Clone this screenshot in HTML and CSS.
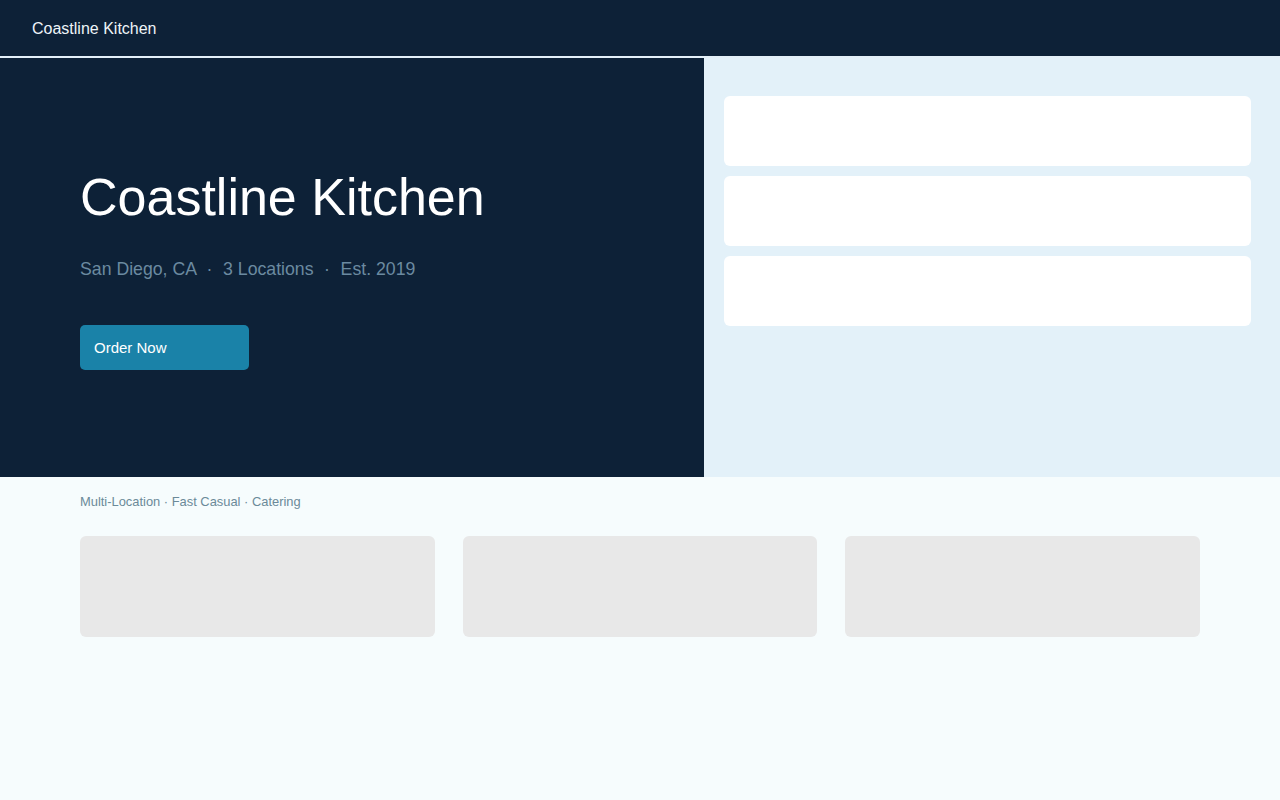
FILE: index.html
```html
<!DOCTYPE html>
<html lang="en">
<head>
<meta charset="utf-8">
<title>Coastline Kitchen</title>
<link rel="stylesheet" href="styles.css">
</head>
<body>
<header class="topbar">
  <span class="brand">Coastline Kitchen</span>
</header>
<section class="hero">
  <div class="hero-main">
    <h1 class="hero-title">Coastline Kitchen</h1>
    <p class="hero-meta">San Diego, CA <span class="sep">&nbsp;·&nbsp;</span> 3 Locations <span class="sep">&nbsp;·&nbsp;</span> Est. 2019</p>
    <a class="btn-order" href="#">Order Now</a>
  </div>
  <aside class="hero-side">
    <div class="side-card"></div>
    <div class="side-card"></div>
    <div class="side-card"></div>
  </aside>
</section>
<main class="content">
  <p class="tags">Multi-Location · Fast Casual · Catering</p>
  <div class="card-grid">
    <div class="tile"></div>
    <div class="tile"></div>
    <div class="tile"></div>
  </div>
</main>
</body>
</html>
```
FILE: styles.css
```css
* { box-sizing: border-box; }
html, body { margin: 0; padding: 0; }
body {
  font-family: "Liberation Sans", Arial, sans-serif;
  background: #f6fcfd;
  width: 1280px;
  min-height: 800px;
}
.topbar {
  height: 58px;
  background: #0d2137;
  border-bottom: 2px solid #e3f0f8;
  display: flex;
  align-items: center;
  padding: 2px 32px 0;
}
.brand {
  color: #eef4f8;
  font-size: 16px;
  line-height: 20px;
}
.hero {
  display: flex;
  height: 419px;
}
.hero-main {
  width: 704px;
  background: #0d2137;
  display: flex;
  flex-direction: column;
  justify-content: center;
  align-items: flex-start;
  padding: 0 80px;
}
.hero-title {
  margin: 0;
  color: #ffffff;
  font-size: 52px;
  font-weight: 400;
  line-height: 62px;
}
.hero-meta {
  margin: 29px 0 0;
  color: #6b8aa0;
  font-size: 17.7px;
  line-height: 24px;
}
.sep {
  margin: 0 0.75px;
}
.btn-order {
  margin-top: 44px;
  display: flex;
  align-items: center;
  width: 169px;
  height: 45px;
  padding: 0 14px;
  background: #1a82a8;
  border-radius: 5px;
  color: #ffffff;
  font-size: 15px;
  text-decoration: none;
}
.hero-side {
  flex: 1;
  background: #e3f1f9;
  padding: 38px 29px 0 20px;
  display: flex;
  flex-direction: column;
  gap: 10px;
}
.side-card {
  height: 70px;
  background: #ffffff;
  border-radius: 6px;
}
.content {
  padding: 17px 80px 0;
}
.tags {
  margin: 0;
  color: #6b8a99;
  font-size: 12.9px;
  line-height: 15px;
}
.card-grid {
  margin-top: 27px;
  display: grid;
  grid-template-columns: repeat(3, 1fr);
  gap: 28px;
}
.tile {
  height: 101px;
  background: #e8e8e8;
  border-radius: 6px;
}
```
